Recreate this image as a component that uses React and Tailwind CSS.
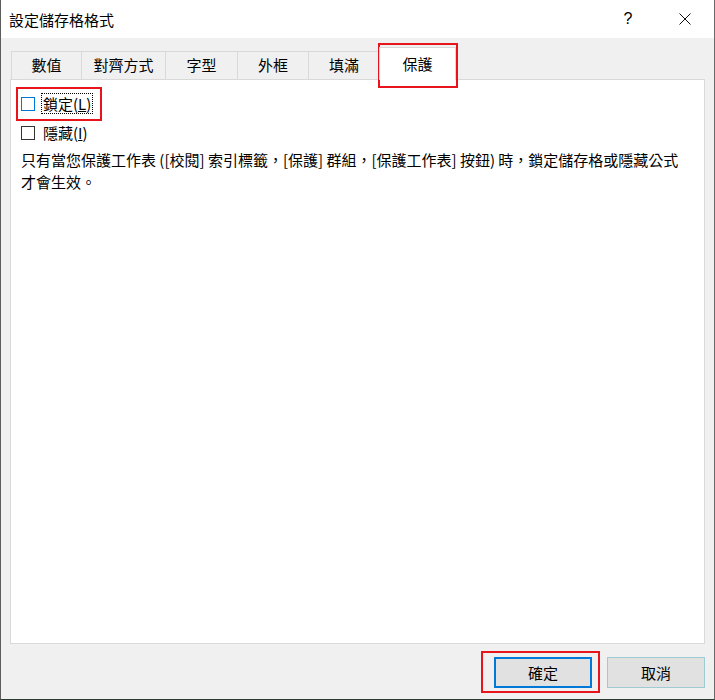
const FONT = { fontFamily: '"Noto Sans CJK TC", "Noto Sans", sans-serif' };

const tabs = [
  { label: "數值", w: "w-[70px]" },
  { label: "對齊方式", w: "w-[84px]" },
  { label: "字型", w: "w-[72px]" },
  { label: "外框", w: "w-[71px]" },
  { label: "填滿", w: "w-[71px]" },
];

function CheckBox({ focused }) {
  return (
    <span
      className={`inline-block w-[14px] h-[14px] bg-white border ${focused ? "border-[#0078d7]" : "border-[#333333]"}`}
    />
  );
}

export default function App() {
  return (
    <div
      className="relative w-[715px] h-[700px] flex flex-col border-l border-r border-b border-l-[#5c5c5c] border-r-[#6a6a6a] border-b-[#2e3b33] bg-[#f0f0f0] text-black"
      style={FONT}
    >
      {/* title bar */}
      <div className="h-[38px] bg-white flex items-center shrink-0">
        <div className="pl-[8px] text-[15px] leading-none flex-1">設定儲存格格式</div>
        <div className="w-[20px] text-center text-[16px] leading-none mr-[41px]" style={{ fontFamily: '"Liberation Sans", sans-serif' }}>?</div>
        <svg width="12" height="12" viewBox="0 0 12 12" className="mr-[23px]">
          <path d="M0.5 0.5 L11.5 11.5 M11.5 0.5 L0.5 11.5" stroke="#111" strokeWidth="1" fill="none" />
        </svg>
      </div>

      {/* body */}
      <div className="flex-1 flex flex-col px-[9px]">
        <div className="flex items-end h-[41px] pl-px">
          {tabs.map((t) => (
            <div
              key={t.label}
              className={`${t.w} h-[28px] flex items-center justify-center text-[15px] border-t border-l border-[#d9d9d9] bg-[#f0f0f0]`}
            >
              {t.label}
            </div>
          ))}
          <div className="w-[77px] h-[33px] -mb-px flex items-center justify-center text-[15px] bg-white border-t border-l border-r border-[#d9d9d9] z-10">
            保護
          </div>
        </div>

        <div className="h-[565px] bg-white border border-[#d9d9d9] pt-[9px] pl-[10px] text-[15px]">
          <div className="flex items-center h-[29px]">
            <CheckBox focused />
            <span className="ml-[6px] px-[1px] h-[21px] flex items-center border border-dotted border-black leading-none">
              鎖定(<span className="underline">L</span>)
            </span>
          </div>
          <div className="flex items-center h-[29px]">
            <CheckBox />
            <span className="ml-[8px] leading-none">
              隱藏(<span className="underline">I</span>)
            </span>
          </div>
          <p className="mt-[2px] leading-[22px] whitespace-nowrap">
            只有當您保護工作表 ([校閱] 索引標籤，[保護] 群組，[保護工作表] 按鈕) 時，鎖定儲存格或隱藏公式
            <br />
            才會生效。
          </p>
        </div>

        <div className="flex justify-end gap-[15px] mt-[13px]">
          <button
            type="button"
            className="w-[98px] h-[31px] bg-[#e1e1e1] border-2 border-[#0078d7] text-[15px] leading-none"
            style={FONT}
          >
            確定
          </button>
          <button
            type="button"
            className="w-[98px] h-[31px] bg-[#e1e1e1] border border-[#9fcbd4] text-[15px] leading-none"
            style={FONT}
          >
            取消
          </button>
        </div>
      </div>

      {/* red annotation boxes */}
      <div className="absolute left-[377px] top-[43px] w-[80px] h-[45px] border-2 border-[#e8141c] pointer-events-none" />
      <div className="absolute left-[15px] top-[87px] w-[86px] h-[34px] border-2 border-[#e8141c] pointer-events-none" />
      <div className="absolute left-[480px] top-[651px] w-[119px] h-[42px] border-2 border-[#e8141c] pointer-events-none" />
    </div>
  );
}
